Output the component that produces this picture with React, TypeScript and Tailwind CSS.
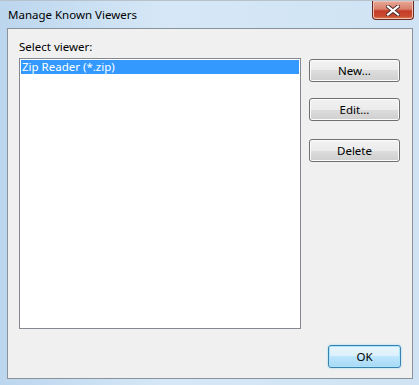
import React from "react";

const font = { fontFamily: '"Segoe UI", "Noto Sans", "Open Sans", sans-serif' };

type BtnProps = { label: string; className?: string; primary?: boolean };

const WinButton = ({ label, className = "", primary = false }: BtnProps) => (
	<button
		className={
			"flex h-[23px] items-center justify-center rounded-[3px] border text-[11.5px] text-black " +
			(primary
				? "border-[#3c7fb1] bg-[linear-gradient(#eaf6fd_0%,#d9f0fc_50%,#bee6fd_50%,#a7d9f5_100%)] shadow-[inset_0_0_0_1px_#a9e4fb,0_0_2px_#7fd3f7] "
				: "border-[#707070] bg-[linear-gradient(#f2f2f2_0%,#ebebeb_50%,#dddddd_50%,#cfcfcf_100%)] shadow-[inset_0_0_0_1px_#fcfcfc] ") +
			className
		}
	>
		{label}
	</button>
);

export default function App() {
	return (
		<div className="flex h-[385px] w-[419px] flex-col bg-[linear-gradient(90deg,#bcd6ee,#d6e8f7_40%,#cfe3f4_100%)]" style={font}>
			{/* title bar */}
			<div className="flex h-[28px] items-start justify-between border-t border-[#b7c2cc] pl-[8px] pr-[5px]">
				<span className="mt-[6px] text-[11.5px] leading-[16px] text-black">Manage Known Viewers</span>
				<div className="flex h-[19px] w-[42px] items-center justify-center rounded-b-[4px] border border-t-0 border-[#6d2a22] bg-[linear-gradient(#e8a998_0%,#d8806c_45%,#c53c28_55%,#c94a30_85%,#e08a55_100%)] shadow-[inset_0_0_0_1px_#eec1b5]">
					<svg width="14" height="11" viewBox="0 0 14 11">
						<path d="M2 1.5 L12 9.5 M12 1.5 L2 9.5" stroke="#4a2a28" strokeWidth="4" strokeLinecap="square" />
						<path d="M2 1.5 L12 9.5 M12 1.5 L2 9.5" stroke="#ffffff" strokeWidth="2.2" strokeLinecap="square" />
					</svg>
				</div>
			</div>

			{/* client area */}
			<div className="ml-[7px] flex h-[351px] w-[406px] flex-col border border-[#8a939c] bg-[#f0f0f0] pl-[11px] pr-[11px] pt-[10px]">
				<div className="h-[15px] text-[11.5px] leading-[15px] text-black">Select viewer:</div>
				<div className="mt-[4px] flex gap-[8px]">
					<div className="h-[271px] w-[282px] border border-[#828790] bg-white p-[1px]">
						<div className="h-[14px] bg-[#3399ff] pl-[1px] text-[11.5px] leading-[14px] text-white">Zip Reader (*.zip)</div>
					</div>
					<div className="mt-[1px] flex flex-col">
						<WinButton label="New..." className="w-[91px]" />
						<WinButton label="Edit..." className="mt-[16px] w-[91px]" />
						<WinButton label="Delete" className="mt-[18px] w-[91px]" />
					</div>
				</div>
				<div className="mt-[16px] flex justify-end">
					<WinButton label="OK" primary className="w-[73px]" />
				</div>
			</div>
		</div>
	);
}
